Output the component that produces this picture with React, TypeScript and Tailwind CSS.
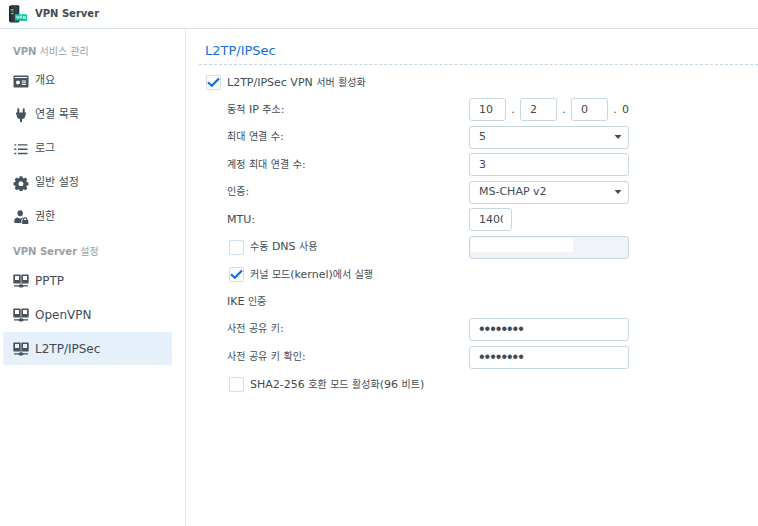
import { useState, type InputHTMLAttributes, type ReactNode } from "react";
import clsx from "clsx";

function OverviewIcon() {
  return (
    <svg viewBox="0 0 16 16" className="size-4" fill="#46525d">
      <path
        fillRule="evenodd"
        d="M1.500 2.500h13a1 1 0 0 1 1 1v10a1 1 0 0 1-1 1h-13a1 1 0 0 1-1-1v-10a1 1 0 0 1 1-1zM1.800 4v1h12.400V4zM5 7.500a2 2 0 1 0 0 4 2 2 0 0 0 0-4zM8.800 7.500v1h4.200v-1zM8.800 9.300v.9H13v-.9zM8.800 11v.9H13V11z"
      />
    </svg>
  );
}

function PlugIcon() {
  return (
    <svg viewBox="0 0 16 16" className="size-4" fill="#46525d">
      <path d="M4.300 2.200a1 1 0 0 1 2 0V5.500h3.400V2.200a1 1 0 0 1 2 0v3.300H13v2h-.7v1.200c0 1.800-1.300 3-3.300 3.400V15H7v-2.900c-2-.4-3.300-1.600-3.300-3.400V7.500H3v-2h1.300z" />
    </svg>
  );
}

function LogIcon() {
  return (
    <svg viewBox="0 0 16 16" className="size-4" fill="#46525d">
      <path d="M1.300 3.200h2v1.400h-2zM1.300 7.500h2v1.400h-2zM1.300 11.800h2v1.400h-2zM5 3.200h9.500v1.400H5zM5 7.500h9.500v1.400H5zM5 11.800h9.500v1.400H5z" />
    </svg>
  );
}

function GearIcon() {
  return (
    <svg viewBox="0 0 16 16" className="size-4" fill="#46525d">
      <path
        fillRule="evenodd"
        d="M6.700 1.300h2.600l.5 1.800 1 .4 1.700-.9 1.800 1.800-.9 1.700.4 1 1.700.5v2.600l-1.700.5-.4 1 .9 1.700-1.800 1.800-1.700-.9-1 .4-.5 1.800H6.700l-.5-1.800-1-.4-1.700.9-1.800-1.800.9-1.700-.4-1-1.700-.5V7.600l1.700-.5.4-1-.9-1.700 1.800-1.800 1.700.9 1-.4zM8 6.300a2.500 2.500 0 1 0 0 5 2.500 2.500 0 0 0 0-5z"
      />
    </svg>
  );
}

function PermissionIcon() {
  return (
    <svg viewBox="0 0 16 16" className="size-4" fill="#46525d">
      <ellipse cx="7.200" cy="4.300" rx="2.700" ry="3" />
      <path d="M1.300 14v-2.800c0-1.700 1.400-2.500 3.300-2.800l2.600 1.400 2.600-1.400c.7.100.9.200 1.200.4-1.200.3-1.800 1.100-1.900 2h-.7V14z" />
      <path
        fillRule="evenodd"
        d="M9.200 11h.7v-.4a2.300 2.300 0 0 1 4.600 0v.4h.8v4H9.200zM11.100 11h2.200v-.4a1.100 1.100 0 0 0-2.200 0z"
      />
    </svg>
  );
}

function ProtocolIcon() {
  return (
    <svg viewBox="0 0 16 16" className="size-4" fill="#46525d">
      <path
        fillRule="evenodd"
        d="M1 1.500h6a.7.700 0 0 1 .7.700v7.500a.7.700 0 0 1-.7.700H1a.7.700 0 0 1-.7-.7V2.200a.7.700 0 0 1 .7-.7zM2 3v4h4V3z"
      />
      <path
        fillRule="evenodd"
        d="M9 1.500h6a.7.700 0 0 1 .7.700v7.500a.7.700 0 0 1-.7.700H9a.7.700 0 0 1-.7-.7V2.200a.7.700 0 0 1 .7-.7zM10 3v4h4V3z"
      />
      <path d="M7.500 10.300h1v1.200c1 0 1.700.3 2 .8H15v1.100h-4.500c-.3.600-1.200 1-2.500 1s-2.200-.4-2.500-1H1v-1.100h4.500c.3-.5 1-.8 2-.8z" />
    </svg>
  );
}

function Logo() {
  return (
    <svg viewBox="0 0 20 18" className="h-[18px] w-5 shrink-0">
      <path d="M1 1.500 3 .3h7.500l.8.700v15.500l-1 1H2.500L1 16z" fill="#1d252d" />
      <path d="M3.500 1h7v16h-7z" fill="#343e48" />
      <path d="M2.500 4.300h3v1.200h-3zM2.800 8h2.500v1.200H2.800z" fill="#8bd32b" />
      <path d="M2.500 6.300h3v1h-3z" fill="#4d7a2a" />
      <path d="M7 9.200h12v6.300H7z" fill="#14c8a4" />
      <path d="M7 14.500h12v1H7z" fill="#0c9e86" />
      <path
        d="m8.500 10.800 1.100 3 1.100-3M12.200 14v-3h1.500v1.500h-1.500M15.500 14v-3l1.800 3v-3"
        fill="none"
        stroke="#e6fffa"
        strokeWidth=".8"
      />
    </svg>
  );
}

const services = [
  { label: "개요", icon: <OverviewIcon /> },
  { label: "연결 목록", icon: <PlugIcon /> },
  { label: "로그", icon: <LogIcon /> },
  { label: "일반 설정", icon: <GearIcon /> },
  { label: "권한", icon: <PermissionIcon /> },
];

const protocols = ["PPTP", "OpenVPN", "L2TP/IPSec"];

// Hangul looks larger than the Latin text beside it, so it is set one size down
function Mixed({ text }: { text: string }) {
  return (
    <span className="whitespace-nowrap">
      {text.split(/([가-힣]+)/).map((part, i) =>
        i % 2 ? (
          <span key={i} className="text-[10px]">
            {part}
          </span>
        ) : (
          part
        )
      )}
    </span>
  );
}

function NavItem({
  icon,
  label,
  active,
  small,
  onClick,
}: {
  icon: ReactNode;
  label: string;
  active: boolean;
  small?: boolean;
  onClick: () => void;
}) {
  return (
    <button
      type="button"
      onClick={onClick}
      className={clsx(
        "flex h-[33px] w-full items-center gap-1.5 rounded-[3px] pl-2.5 text-left",
        small ? "text-[11px]" : "text-xs",
        active && "bg-[#e6f0fb]"
      )}
    >
      {icon}
      {label}
    </button>
  );
}

const fieldClass =
  "h-[23px] rounded-[3px] border border-[#c8d6e2] bg-white pl-[9px] pr-2 outline-none focus:border-[#0b6fe8]";

function Row({ tall, children }: { tall?: boolean; children: ReactNode }) {
  return (
    <div className={clsx("flex items-center", tall ? "h-7" : "h-[27px]")}>
      {children}
    </div>
  );
}

function FieldLabel({ id, text }: { id: string; text: string }) {
  return (
    <label htmlFor={id} className="w-[264px] shrink-0 pl-[22px]">
      <Mixed text={text} />
    </label>
  );
}

function CheckField({
  label,
  checked,
  nested,
}: {
  label: string;
  checked?: boolean;
  nested?: boolean;
}) {
  return (
    <label
      className={clsx(
        "flex w-[264px] shrink-0 items-center gap-1.5",
        nested ? "pl-6" : "pl-px"
      )}
    >
      <span className="relative size-[15px]">
        <input
          type="checkbox"
          defaultChecked={checked}
          className="peer block size-[15px] appearance-none rounded-[2px] border border-[#d2deeb] bg-white"
        />
        <svg
          viewBox="0 0 15 15"
          className="pointer-events-none absolute inset-0 hidden size-[15px] peer-checked:block"
          fill="none"
          stroke="#0b6fe8"
          strokeWidth="2.200"
        >
          <path d="m2 7.300 3.800 3.500L13 3.500" />
        </svg>
      </span>
      <Mixed text={label} />
    </label>
  );
}

function SelectField({ id, options }: { id: string; options: string[] }) {
  return (
    <div className="relative">
      <select
        id={id}
        className={clsx(fieldClass, "block w-40 appearance-none text-[11px]")}
      >
        {options.map((option) => (
          <option key={option}>{option}</option>
        ))}
      </select>
      <svg
        viewBox="0 0 8 4"
        className="pointer-events-none absolute right-[7px] top-[9px] h-1 w-2"
        fill="#414b55"
      >
        <path d="M.5 0h7L4 4z" />
      </svg>
    </div>
  );
}

function TextField({ className, ...props }: InputHTMLAttributes<HTMLInputElement>) {
  return <input className={clsx(fieldClass, "text-[11px]", className)} {...props} />;
}

function PasswordField({ id }: { id: string }) {
  return (
    <input
      id={id}
      type="password"
      autoComplete="off"
      defaultValue="password"
      className={clsx(fieldClass, "w-40 font-['Liberation_Sans',sans-serif] text-base")}
    />
  );
}

function AddressFields() {
  return (
    <div className="flex items-center">
      {["10", "2", "0"].map((octet, i) => (
        <div key={i} className="flex items-center">
          <TextField
            id={`ip-${i}`}
            aria-label={`IP ${i + 1}`}
            defaultValue={octet}
            className="w-[37px]"
          />
          <span className="w-3.5 text-center">.</span>
        </div>
      ))}
      <span>0</span>
    </div>
  );
}

export default function App() {
  const [page, setPage] = useState("L2TP/IPSec");

  return (
    <div className="flex min-h-screen flex-col bg-white font-['DejaVu_Sans','Noto_Sans_CJK_KR',sans-serif] text-[11px] leading-4 text-[#414b55]">
      <header className="flex h-[29px] items-center gap-[7px] border-b border-[#d9e2eb] pl-2">
        <Logo />
        <h1 className="text-[10px] font-bold">VPN Server</h1>
      </header>

      <div className="flex grow">
        <nav className="w-[186px] shrink-0 border-r border-[#e1e6ec] pl-[3px] pr-[13px] pt-[15px]">
          <h2 className="pl-2.5 text-[10px] text-[#999fa5]">
            <b>VPN</b> 서비스 관리
          </h2>
          <div className="mt-1 flex flex-col gap-px">
            {services.map(({ label, icon }) => (
              <NavItem
                key={label}
                icon={icon}
                label={label}
                small
                active={page === label}
                onClick={() => setPage(label)}
              />
            ))}
          </div>
          <h2 className="mt-[11px] pl-2.5 text-[10px] text-[#999fa5]">
            <b>VPN Server</b> 설정
          </h2>
          <div className="mt-1 flex flex-col gap-px">
            {protocols.map((label) => (
              <NavItem
                key={label}
                icon={<ProtocolIcon />}
                label={label}
                active={page === label}
                onClick={() => setPage(label)}
              />
            ))}
          </div>
        </nav>

        <main className="grow pl-[13px] pt-3.5">
          <h2 className="border-b border-dashed border-[#c3d5e3] pb-[5px] pl-1.5 text-[13px] text-[#1470e0]">
            L2TP/IPSec
          </h2>
          <form className="pl-1.5 pt-1">
            <Row>
              <CheckField label="L2TP/IPSec VPN 서버 활성화" checked />
            </Row>
            <Row>
              <FieldLabel id="ip-0" text="동적 IP 주소:" />
              <AddressFields />
            </Row>
            <Row tall>
              <FieldLabel id="max" text="최대 연결 수:" />
              <SelectField id="max" options={["5", "10", "15", "20"]} />
            </Row>
            <Row>
              <FieldLabel id="account-max" text="계정 최대 연결 수:" />
              <TextField id="account-max" defaultValue="3" className="w-40" />
            </Row>
            <Row tall>
              <FieldLabel id="auth" text="인증:" />
              <SelectField id="auth" options={["MS-CHAP v2", "PAP"]} />
            </Row>
            <Row>
              <FieldLabel id="mtu" text="MTU:" />
              <TextField id="mtu" defaultValue="1400" className="w-[43px]" />
            </Row>
            <Row tall>
              <CheckField label="수동 DNS 사용" nested />
              <div className="relative">
                <input
                  aria-label="DNS"
                  disabled
                  className="block h-[23px] w-40 rounded-[3px] border border-[#c8d6e2] bg-[#f0f4f8]"
                />
                <span className="absolute left-0.5 top-0.5 h-3.5 w-[102px] bg-white" />
              </div>
            </Row>
            <Row>
              <CheckField label="커널 모드(kernel)에서 실행" checked nested />
            </Row>
            <Row>
              <p className="pl-[22px]">
                <Mixed text="IKE 인증" />
              </p>
            </Row>
            <Row tall>
              <FieldLabel id="psk" text="사전 공유 키:" />
              <PasswordField id="psk" />
            </Row>
            <Row tall>
              <FieldLabel id="psk-confirm" text="사전 공유 키 확인:" />
              <PasswordField id="psk-confirm" />
            </Row>
            <Row>
              <CheckField label="SHA2-256 호환 모드 활성화(96 비트)" nested />
            </Row>
          </form>
        </main>
      </div>
    </div>
  );
}
